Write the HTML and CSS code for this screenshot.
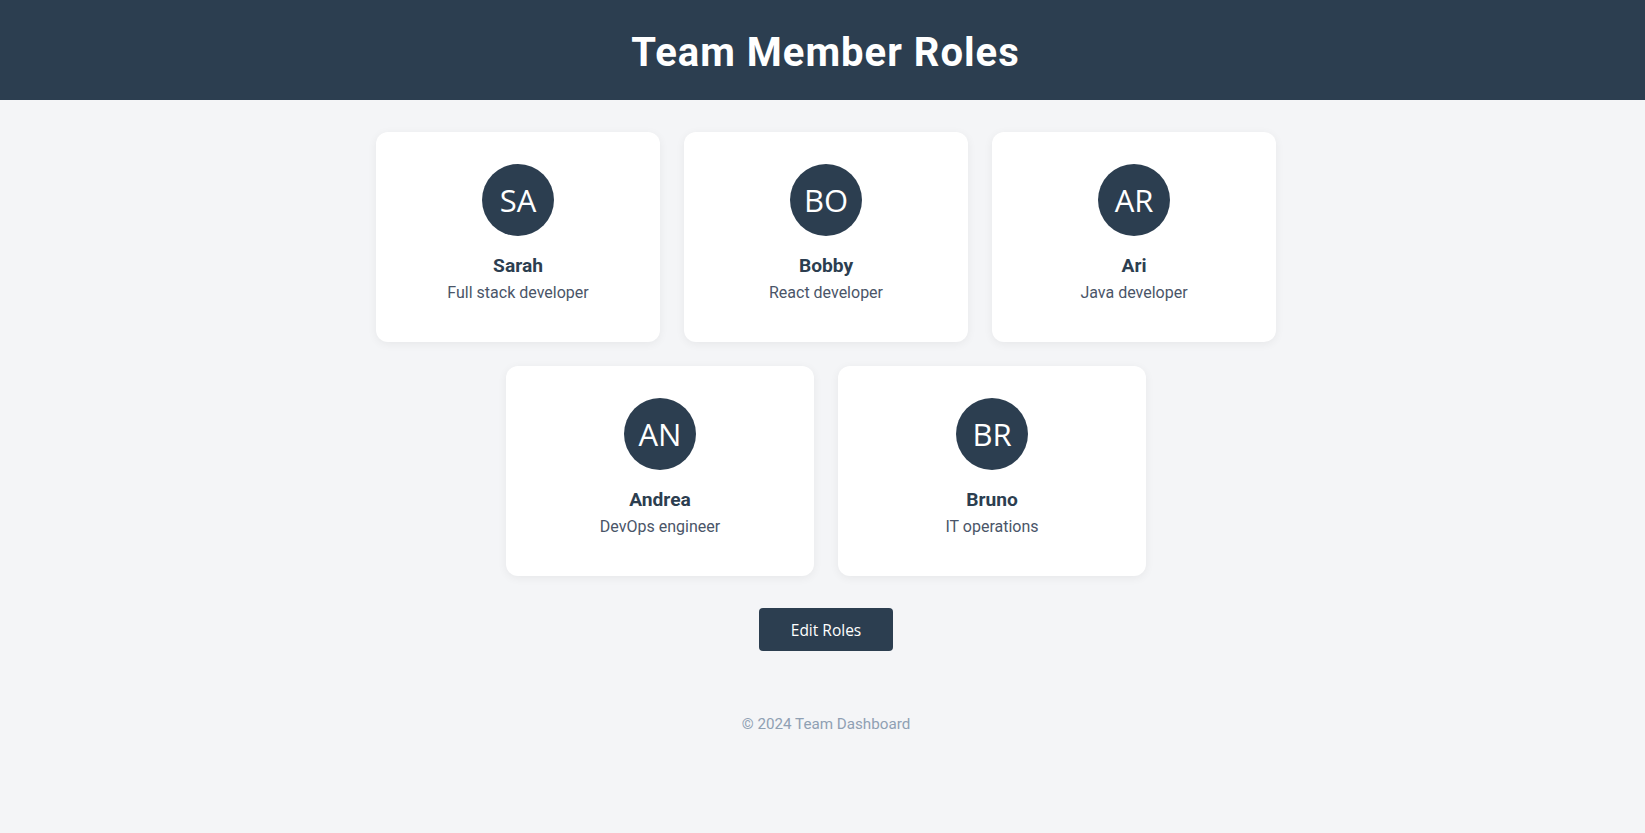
FILE: index.html
```html
<!DOCTYPE html>
<html lang="en">
<head>
<meta charset="utf-8">
<title>Team Member Roles</title>
<link rel="stylesheet" href="styles.css">
</head>
<body>
<header class="site-header">
  <h1 class="site-title">Team Member Roles</h1>
</header>
<main class="main">
  <section class="team">
    <div class="team-row">
      <article class="card card--third">
        <div class="avatar">SA</div>
        <h3 class="name">Sarah</h3>
        <p class="role">Full stack developer</p>
      </article>
      <article class="card card--third">
        <div class="avatar">BO</div>
        <h3 class="name">Bobby</h3>
        <p class="role">React developer</p>
      </article>
      <article class="card card--third">
        <div class="avatar">AR</div>
        <h3 class="name">Ari</h3>
        <p class="role">Java developer</p>
      </article>
    </div>
    <div class="team-row">
      <article class="card card--half">
        <div class="avatar">AN</div>
        <h3 class="name">Andrea</h3>
        <p class="role">DevOps engineer</p>
      </article>
      <article class="card card--half">
        <div class="avatar">BR</div>
        <h3 class="name">Bruno</h3>
        <p class="role">IT operations</p>
      </article>
    </div>
  </section>
  <div class="actions">
    <button class="btn" type="button">Edit Roles</button>
  </div>
</main>
<footer class="site-footer">
  <p class="copyright">© 2024 Team Dashboard</p>
</footer>
</body>
</html>
```
FILE: styles.css
```css
* { box-sizing: border-box; }

html, body {
  margin: 0;
  padding: 0;
}

body {
  background: #f4f5f7;
  font-family: Roboto, "Liberation Sans", Arial, sans-serif;
  color: #2c3e50;
  min-height: 833px;
}

.site-header {
  background: #2c3e50;
  padding: 29px 0 23px 6px;
  text-align: center;
}

.site-title {
  margin: 0;
  color: #ffffff;
  font-size: 40px;
  line-height: 48px;
  font-weight: 700;
  letter-spacing: 1px;
}

.main {
  padding: 32px 0 0 7px;
}

.team {
  display: flex;
  flex-direction: column;
  gap: 24px;
}

.team-row {
  display: flex;
  justify-content: center;
  gap: 24px;
}

.card {
  background: #ffffff;
  border-radius: 12px;
  box-shadow: 0 2px 10px rgba(0, 0, 0, 0.06);
  height: 210px;
  padding: 32px 16px 0;
  display: flex;
  flex-direction: column;
  align-items: center;
  text-align: center;
}

.card--third { width: 284px; }
.card--half { width: 308px; }

.avatar {
  width: 72px;
  height: 72px;
  border-radius: 50%;
  background: #2c3e50;
  color: #ffffff;
  font-family: "Open Sans", "Noto Sans", sans-serif;
  font-size: 31px;
  display: flex;
  align-items: center;
  justify-content: center;
  margin-bottom: 18px;
}

.name {
  margin: 0;
  font-size: 19.2px;
  line-height: 23px;
  font-weight: 700;
  color: #2c3e50;
}

.role {
  margin: 6px 0 0;
  font-size: 16px;
  line-height: 19px;
  color: #4a5568;
}

.actions {
  display: flex;
  justify-content: center;
  padding-top: 32px;
  padding-right: 7px;
}

.btn {
  background: #2c3e50;
  color: #ffffff;
  border: none;
  border-radius: 4px;
  height: 43px;
  padding: 0 32px;
  font-family: "Open Sans", "Noto Sans", sans-serif;
  font-size: 15.5px;
  cursor: pointer;
  margin-left: 7px;
}

.site-footer {
  padding-top: 64px;
  text-align: center;
  padding-left: 7px;
}

.copyright {
  margin: 0;
  font-size: 15.2px;
  line-height: 19px;
  color: #8fa0b3;
}
```
